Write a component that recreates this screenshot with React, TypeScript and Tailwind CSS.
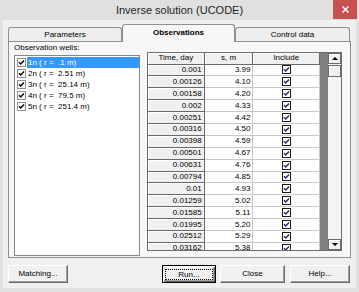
const times = [
  "0.001", "0.00126", "0.00158", "0.002", "0.00251", "0.00316", "0.00398", "0.00501",
  "0.00631", "0.00794", "0.01", "0.01259", "0.01585", "0.01995", "0.02512", "0.03162",
];
const drawdowns = [
  "3.99", "4.10", "4.20", "4.33", "4.42", "4.50", "4.59", "4.67",
  "4.76", "4.85", "4.93", "5.02", "5.11", "5.20", "5.29", "5.38",
];
const wells = [
  "1n ( r =  .1 m)",
  "2n ( r =  2.51 m)",
  "3n ( r =  25.14 m)",
  "4n ( r =  79.5 m)",
  "5n ( r =  251.4 m)",
];

function IncludeBox() {
  return (
    <svg width="9" height="9" viewBox="0 0 9 9">
      <rect x="0.5" y="0.5" width="8" height="8" fill="#fff" stroke="#1c1c1c" />
      <path d="M2 4.2 L3.7 6 L7 2.6" fill="none" stroke="#1a2a70" strokeWidth="1.4" />
    </svg>
  );
}

function ListBox() {
  return (
    <svg width="9" height="9" viewBox="0 0 9 9">
      <rect x="0.5" y="0.5" width="8" height="8" fill="#fff" stroke="#8f8f8f" />
      <path d="M2 4.2 L3.7 6 L7 2.6" fill="none" stroke="#000" strokeWidth="1.4" />
    </svg>
  );
}

function Button({ label, w, isDefault = false }: { label: string; w: string; isDefault?: boolean }) {
  return (
    <div
      className={`${w} flex h-[18px] items-center justify-center bg-[#f0f0f0] ${
        isDefault
          ? "border border-black shadow-[inset_1px_1px_0_#fff,inset_-1px_-1px_0_#696969,inset_-2px_-2px_0_#a0a0a0]"
          : "border-t border-l border-white border-r border-b border-r-[#696969] border-b-[#696969] shadow-[inset_-1px_-1px_0_#a0a0a0]"
      }`}
    >
      {isDefault ? (
        <span className="border border-dotted border-black px-[12px] leading-[9px]">{label}</span>
      ) : (
        <span>{label}</span>
      )}
    </div>
  );
}

export default function App() {
  return (
    <div className="relative flex h-[292px] w-[359px] flex-col bg-[#e0e0e0] px-[3px] pb-[4px] font-['Liberation_Sans',Arial,sans-serif] text-[8px] leading-[10px] text-black">
      {/* Title bar */}
      <div className="flex h-[20px] shrink-0 items-center justify-center text-[11px] text-[#1e1e1e]">
        Inverse solution (UCODE)
      </div>
      <div className="absolute right-[2px] top-0 flex h-[19px] w-[24px] items-center justify-center bg-[#c75050]">
        <svg width="7" height="7" viewBox="0 0 7 7">
          <path d="M0.5 0.5 L6.5 6.5 M6.5 0.5 L0.5 6.5" stroke="#fff" strokeWidth="1.5" />
        </svg>
      </div>

      {/* Client */}
      <div className="flex flex-1 flex-col bg-[#f0f0f0] px-[5px] pt-[4px]">
        {/* Tabs */}
        <div className="flex h-[17px] items-end">
          <div className="flex h-[14px] w-[114px] items-center justify-center rounded-t-[3px] border border-b-0 border-[#8e8f8f] bg-[#eeeeee]">
            Parameters
          </div>
          <div className="relative z-10 -mb-px flex h-[18px] w-[113px] items-center justify-center rounded-t-[3px] border border-b-0 border-[#8e8f8f] bg-[#f7f7f7] pb-[2px] font-bold">
            Observations
          </div>
          <div className="flex h-[14px] w-[115px] items-center justify-center rounded-t-[3px] border border-b-0 border-[#8e8f8f] bg-[#eeeeee]">
            Control data
          </div>
        </div>

        {/* Panel */}
        <div className="flex h-[217px] border border-[#8e8f8f] bg-[#f7f7f7] pl-[5px]">
          <div className="flex w-[126px] flex-col pt-[1px]">
            <div className="h-[12px]">Observation wells:</div>
            <div className="h-[201px] border border-[#828790] bg-white pt-[1px]">
              {wells.map((w, i) => (
                <div key={w} className="flex h-[11px] items-center">
                  <div className="ml-[2px] mr-[1px] flex">
                    <ListBox />
                  </div>
                  <div
                    className={`flex-1 whitespace-pre px-[1px] leading-[11px] ${
                      i === 0 ? "bg-[#3399ff] text-white" : ""
                    }`}
                  >
                    {w}
                  </div>
                </div>
              ))}
            </div>
          </div>

          {/* Grid */}
          <div className="ml-[7px] mt-[10px] flex h-[199px] w-[195px] overflow-hidden border border-[#6d6d6d] bg-[#808080]">
            <div className="flex w-[173px] flex-col overflow-hidden bg-white">
              <div className="flex h-[11.5px] shrink-0 bg-[#f0f0f0]">
                <div className="flex w-[57px] items-center justify-center border-b border-r border-[#696969] shadow-[inset_1px_1px_0_#fff]">
                  Time, day
                </div>
                <div className="flex w-[49px] items-center justify-center border-b border-r border-[#696969] shadow-[inset_1px_1px_0_#fff]">
                  s, m
                </div>
                <div className="flex w-[67px] items-center justify-center border-b border-r border-[#696969] shadow-[inset_1px_1px_0_#fff]">
                  Include
                </div>
              </div>
              {times.map((t, i) => (
                <div key={t} className="flex h-[11.9px] shrink-0">
                  <div className="flex w-[57px] items-center justify-end border-b border-r border-[#696969] bg-[#f0f0f0] pr-[2px] shadow-[inset_1px_1px_0_#fff]">
                    {t}
                  </div>
                  <div className="flex w-[49px] items-center justify-end border-b border-r border-[#c8c8c8] pr-[2px]">
                    {drawdowns[i]}
                  </div>
                  <div className="flex w-[67px] items-center justify-center border-b border-r border-[#c8c8c8]">
                    <IncludeBox />
                  </div>
                </div>
              ))}
            </div>
            <div className="w-[8px]" />
            {/* Scrollbar */}
            <div className="flex w-[13px] flex-col bg-[#f4f4f4]">
              <div className="flex h-[11px] items-center justify-center border border-[#6a6a6a] bg-[#f0f0f0] shadow-[inset_1px_1px_0_#fff]">
                <div className="h-0 w-0 border-x-[3px] border-b-[3px] border-x-transparent border-b-black" />
              </div>
              <div className="mt-px h-[12px] border border-[#6a6a6a] bg-[#f0f0f0] shadow-[inset_1px_1px_0_#fff]" />
              <div className="flex-1" />
              <div className="flex h-[11px] items-center justify-center border border-[#6a6a6a] bg-[#f0f0f0] shadow-[inset_1px_1px_0_#fff]">
                <div className="h-0 w-0 border-x-[3px] border-t-[3px] border-x-transparent border-t-black" />
              </div>
            </div>
          </div>
        </div>

        {/* Buttons */}
        <div className="mt-[7px] flex">
          <Button label="Matching..." w="w-[60px]" />
          <div className="ml-auto mr-[1px] flex">
            <Button label="Run..." w="w-[54px]" isDefault />
            <div className="ml-[4px]">
              <Button label="Close" w="w-[65px]" />
            </div>
            <div className="ml-[5px]">
              <Button label="Help..." w="w-[60px]" />
            </div>
          </div>
        </div>
      </div>
    </div>
  );
}
